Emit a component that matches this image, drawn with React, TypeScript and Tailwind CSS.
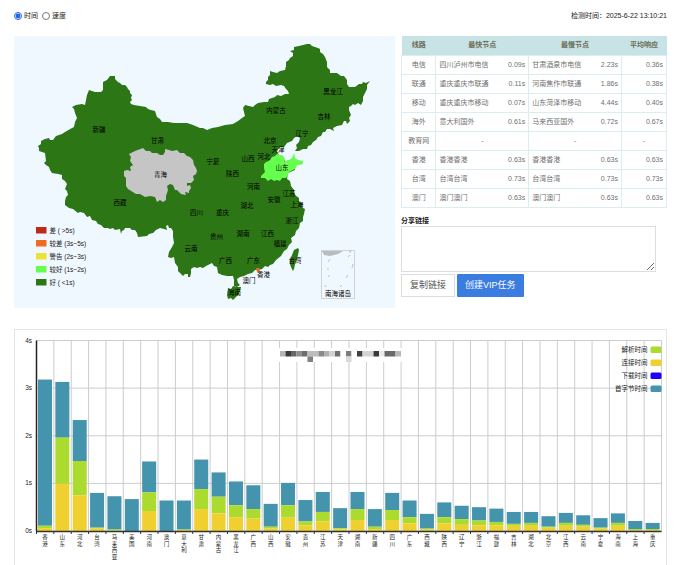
import * as React from 'react';

type RouteRow = {
  line: string;
  fastest: [string, string] | null;
  slowest: [string, string] | null;
  average: string;
};

const routes: RouteRow[] = [
  { line: '电信', fastest: ['四川泸州市电信', '0.09s'], slowest: ['甘肃酒泉市电信', '2.23s'], average: '0.36s' },
  { line: '联通', fastest: ['重庆重庆市联通', '0.11s'], slowest: ['河南焦作市联通', '1.86s'], average: '0.38s' },
  { line: '移动', fastest: ['重庆重庆市移动', '0.07s'], slowest: ['山东菏泽市移动', '4.44s'], average: '0.40s' },
  { line: '海外', fastest: ['意大利国外', '0.61s'], slowest: ['马来西亚国外', '0.72s'], average: '0.67s' },
  { line: '教育网', fastest: null, slowest: null, average: '-' },
  { line: '香港', fastest: ['香港香港', '0.63s'], slowest: ['香港香港', '0.63s'], average: '0.63s' },
  { line: '台湾', fastest: ['台湾台湾', '0.73s'], slowest: ['台湾台湾', '0.73s'], average: '0.73s' },
  { line: '澳门', fastest: ['澳门澳门', '0.63s'], slowest: ['澳门澳门', '0.63s'], average: '0.63s' },
];

// [name, x, y] of each label's centre
const mapLabels: [string, number, number][] = [
  ['新疆', 170, 186], ['甘肃', 287, 209], ['青海', 293, 277], ['西藏', 212, 332],
  ['四川', 365, 353], ['云南', 354, 425], ['黑龙江', 638, 110], ['内蒙古', 524, 149],
  ['吉林', 620, 160], ['辽宁', 576, 195], ['北京', 512, 208], ['天津', 528, 226],
  ['宁夏', 398, 250], ['山西', 468, 245], ['河北', 500, 241], ['陕西', 437, 274],
  ['山东', 536, 263], ['河南', 479, 300], ['江苏', 550, 314], ['安徽', 520, 326],
  ['上海', 566, 337], ['湖北', 466, 339], ['重庆', 417, 353], ['浙江', 556, 368],
  ['贵州', 405, 400], ['湖南', 458, 394], ['江西', 507, 394], ['福建', 532, 414],
  ['广西', 423, 448], ['广东', 479, 448], ['台湾', 562, 448], ['香港', 499, 477],
  ['澳门', 470, 488], ['海南', 441, 512], ['南海诸岛', 648, 514],
];

const mapLegend = [
  { label: '差 ( >5s)', color: '#bd2a17' },
  { label: '较差 (3s~5s)', color: '#ee6b24' },
  { label: '警告 (2s~3s)', color: '#e8e337' },
  { label: '较好 (1s~2s)', color: '#66ff4d' },
  { label: '好 ( <1s)', color: '#2d7616' },
];

const chartLegend = [
  { label: '解析时间', color: '#abdb2e' },
  { label: '连接时间', color: '#f0d02f' },
  { label: '下载时间', color: '#2200ff' },
  { label: '首字节时间', color: '#4494ae' },
];

// [region, total, connect + dns, connect] in seconds
const bars: [string, number, number, number][] = [
  ['香港', 3.18, 0.11, 0.06], ['山东', 3.13, 1.96, 0.99], ['河北', 2.33, 1.47, 0.75],
  ['台湾', 0.8, 0.07, 0.05], ['马来西亚', 0.73, 0.03, 0.01], ['美国', 0.67, 0, 0],
  ['河南', 1.46, 0.81, 0.42], ['澳门', 0.64, 0, 0], ['意大利', 0.64, 0.03, 0.02],
  ['甘肃', 1.5, 0.88, 0.46], ['内蒙古', 1.23, 0.72, 0.37], ['黑龙江', 1.04, 0.54, 0.29],
  ['广西', 0.96, 0.46, 0.26], ['山西', 0.57, 0.09, 0.05], ['安徽', 1.01, 0.54, 0.28],
  ['贵州', 0.65, 0.2, 0.12], ['江苏', 0.82, 0.4, 0.2], ['天津', 0.48, 0.06, 0.03],
  ['湖南', 0.82, 0.46, 0.23], ['新疆', 0.46, 0.09, 0.04], ['四川', 0.8, 0.44, 0.23],
  ['广东', 0.64, 0.29, 0.16], ['西藏', 0.36, 0.05, 0.03], ['陕西', 0.6, 0.29, 0.16],
  ['辽宁', 0.53, 0.25, 0.13], ['浙江', 0.5, 0.22, 0.12], ['福建', 0.47, 0.19, 0.12],
  ['吉林', 0.4, 0.15, 0.11], ['湖北', 0.4, 0.17, 0.11], ['北京', 0.31, 0.09, 0.07],
  ['江西', 0.38, 0.17, 0.11], ['云南', 0.33, 0.13, 0.1], ['宁夏', 0.27, 0.07, 0.05],
  ['海南', 0.37, 0.17, 0.11], ['上海', 0.21, 0.04, 0.02], ['重庆', 0.17, 0.04, 0.02],
];

// Pixelated strip over the chart that hides the tested address
const mosaic = [
  '#b5b5b5', '#3a3a3a', '#686868', '#909090', '#6d6d6d', '#bbbbbb', '#bdbdbd', '#8a8a8a',
  '#b0b0b0', '#d2d2d2', '#707070', '#ffffff', '#7d7d7d', '#ffffff', '#404040', '#d4d4d4',
  '#d4d4d4', '#3a3a3a', '#ececec', '#6a6a6a', '#6a6a6a', '#b8b8b8',
];

const MAINLAND =
  'M110 76L115 76L115 79L118 82L120 83L122 85L125 85L127 87L128 89L130 91L130 93L132 95L131 98L132 100L130 102L131 104L134 105L140 106L146 107L148 109L151 110L155 111L157 117L160 119L162 122L168 122L174 123L187 123L193 125L200 128L203 128L207 130L212 128L218 127L225 125L233 124L238 121L242 118L245 116L244 112L243 108L245 105L249 106L253 107L255 105L258 103L264 102L268 102L269 99L272 98L275 97L277 95L281 96L285 94L289 94L288 91L286 89L284 86L281 85L276 86L273 84L270 85L266 84L266 82L268 80L268 77L270 75L270 71L273 72L277 73L280 71L285 70L286 66L286 62L289 60L290 58L293 56L293 53L290 51L294 50L294 47L299 46L303 45L307 44L310 44L312 46L318 48L320 49L320 52L323 54L325 57L327 62L327 67L330 70L330 73L337 73L341 76L344 76L347 80L347 84L349 87L355 87L359 84L362 84L363 82L366 83L370 81L367 85L367 89L365 93L363 97L363 101L361 105L358 103L355 105L353 104L351 106L349 107L349 110L351 115L349 118L350 121L347 124L346 121L344 121L342 125L337 126L333 128L334 131L330 129L327 129L325 132L323 132L321 136L318 137L316 140L313 142L311 145L308 146L307 149L303 149L299 151L295 151L297 148L296 145L299 142L300 138L297 136L294 138L292 141L287 143L284 147L281 147L278 149L277 152L279 155L283 156L285 162L289 160L294 163L295 170L288 173L287 179L290 181L291 186L294 190L295 195L299 198L299 202L303 204L301 207L305 209L304 214L303 217L303 221L300 223L299 228L296 231L295 235L291 238L292 242L289 245L287 249L284 251L281 256L276 260L273 264L270 265L268 267L265 266L262 269L258 270L255 270L252 273L248 274L244 276L240 277L237 279L238 283L240 285L237 287L234 286L234 280L233 276L227 276L222 275L218 273L217 267L214 266L212 263L208 265L206 266L203 268L200 267L197 268L194 267L191 269L191 273L190 277L188 277L188 274L185 274L183 276L180 273L178 271L178 267L175 263L174 257L171 258L168 257L169 252L172 247L174 243L173 237L173 231L171 228L169 228L168 225L166 226L167 230L164 229L160 228L156 230L153 233L149 234L147 236L138 237L137 233L135 230L132 230L130 228L125 228L124 230L122 231L121 234L120 229L115 230L113 228L110 229L108 228L104 228L101 225L98 224L96 221L92 220L90 216L87 217L84 213L80 212L78 213L73 209L69 208L65 205L65 201L66 197L68 195L67 191L65 189L67 184L65 181L62 179L62 175L58 174L52 173L50 170L49 167L46 165L44 163L46 161L45 153L42 152L39 151L39 148L38 146L41 144L41 141L45 139L49 138L50 140L53 140L56 136L62 134L65 132L72 128L74 127L75 122L77 118L75 113L74 109L72 107L76 105L82 104L85 105L86 100L87 95L89 90L92 91L95 92L101 92L103 90L103 87L103 82L107 80Z';
const QINGHAI =
  'M129 154L135 151L143 148L146 151L150 151L152 153L157 153L160 155L163 155L165 152L165 149L169 150L172 151L177 150L180 153L184 153L187 156L190 157L193 160L194 165L196 168L197 171L196 174L193 176L194 180L191 183L187 183L187 186L190 185L191 188L189 191L189 193L185 192L186 195L181 194L177 190L175 190L173 185L170 184L167 186L168 190L166 196L166 200L163 202L160 200L157 202L155 197L150 196L145 197L140 194L136 194L128 189L126 186L126 182L126 178L124 176L124 171L127 170L131 171L130 167L133 165L130 161L131 157Z';
const SHANDONG =
  'M266 162L269 161L272 157L275 156L277 154L283 156L285 159L284 162L289 160L292 158L294 153L295 158L298 160L303 161L303 164L299 165L297 165L296 168L293 170L289 172L288 175L286 178L282 178L280 181L277 180L274 181L271 179L268 181L265 178L261 178L261 176L265 172L264 168L264 164Z';
const HAINAN = 'M228 288L231 289L233 286L237 287L241 287L240 291L238 295L236 297L233 300L231 298L228 299L227 295Z';
const TAIWAN = 'M298 248L299 250L298 255L297 260L295 264L294 269L293 271L291 267L290 264L290 260L292 255L294 250Z';

const ISLANDS = 'M322 251L343 251L338 254L330 256L324 255ZM349 251L352 250L350 253Z';
const ISLAND_DASHES =
  'M330 259L328 262M328 268L328 270M330 275L328 277M325 285L326 287M348 257L350 255M353 264L352 268M348 275L346 278M342 285L340 287';

function ChinaMap() {
  return (
    <svg
      viewBox="0 0 762 544"
      className="block w-full bg-[#f0f8ff] font-['Liberation_Sans','Noto_Sans_CJK_SC',sans-serif]"
      role="img"
      aria-label="全国响应时间地图"
    >
      <g transform="scale(2) translate(-14 -36)">
        <path d={MAINLAND} fill="#2d7616" />
        <path d={HAINAN} fill="#2d7616" />
        <path d={TAIWAN} fill="#2d7616" />
        <path d={QINGHAI} fill="#c5c5c5" />
        <path d={SHANDONG} fill="#66ff4d" />
        <path d="M256 268L259 268L260 271L257 272Z" fill="#ee6b24" />
        <path d={ISLANDS} fill="#b8bcc0" />
        <path d={ISLAND_DASHES} fill="none" stroke="#bcc2c8" strokeWidth="1" />
      </g>
      <rect x="615" y="429" width="66" height="96" fill="none" stroke="#d0d4d8" strokeWidth="2" />
      {mapLabels.map(([name, x, y]) => (
        <text key={name} x={x} y={y + 5} textAnchor="middle" fontSize="13" fill="#000">
          {name}
        </text>
      ))}
      {mapLegend.map((item, i) => (
        <g key={item.label}>
          <rect x="44" y={382 + i * 26} width="21" height="13" fill={item.color} />
          <text x="71" y={393 + i * 26} fontSize="13" fill="#222">
            {item.label}
          </text>
        </g>
      ))}
    </svg>
  );
}

const LEFT = 45;
const RIGHT = 1295;
const TOP = 23;
const BASE = 404;
const STEP = (RIGHT - LEFT) / bars.length;
const SECOND = (BASE - TOP) / 4;

function TimingChart() {
  return (
    <svg
      viewBox="2 2 1302 470"
      className="block w-full font-['Liberation_Sans','Noto_Sans_CJK_SC',sans-serif]"
      role="img"
      aria-label="各地区响应时间"
    >
      {[0, 1, 2, 3, 4].map((s) => (
        <g key={s}>
          <path d={`M${LEFT} ${BASE - s * SECOND}H${RIGHT}`} stroke="#ccc" strokeWidth="2" />
          <text x="36" y={BASE - s * SECOND + 4} textAnchor="end" fontSize="13" fill="#222">
            {s}s
          </text>
        </g>
      ))}
      {bars.map(([name], i) => (
        <path key={name} d={`M${LEFT + (i + 1) * STEP} ${TOP}V${BASE}`} stroke="#ccc" strokeWidth="2" />
      ))}
      {bars.map(([name, total, dns, connect], i) => {
        const x = LEFT + i * STEP + 3;
        return (
          <g key={name}>
            <rect x={x} y={BASE - total * SECOND} width="28" height={(total - dns) * SECOND} fill="#4494ae" />
            <rect x={x} y={BASE - dns * SECOND} width="28" height={(dns - connect) * SECOND} fill="#abdb2e" />
            <rect x={x} y={BASE - connect * SECOND} width="28" height={connect * SECOND} fill="#f0d02f" />
            <path d={`M${LEFT + i * STEP} ${BASE}v6`} stroke="#333" strokeWidth="2" />
            {name.split('').map((char, n) => (
              <text key={n} x={x + 14} y={420 + n * 13} textAnchor="middle" fontSize="11" fill="#222">
                {char}
              </text>
            ))}
          </g>
        );
      })}
      <path d={`M${LEFT} ${TOP}V${BASE}`} stroke="#222" strokeWidth="3" />
      <path d={`M${LEFT - 1} ${BASE + 1}H${RIGHT}`} stroke="#333" strokeWidth="3" />

      <rect x="528" y="38" width="250" height="28" fill="#fff" />
      {mosaic.map((color, i) => (
        <rect key={i} x={532 + i * 11} y="44" width="11" height="11" fill={color} />
      ))}
      <rect x="587" y="55" width="11" height="11" fill="#808080" />
      <rect x="664" y="55" width="11" height="11" fill="#dadada" />

      {chartLegend.map((item, i) => (
        <g key={item.label}>
          <rect x="1273" y={35 + i * 26} width="22" height="13" rx="3" fill={item.color} />
          <text x="1267" y={46 + i * 26} textAnchor="end" fontSize="13" fill="#222">
            {item.label}
          </text>
        </g>
      ))}
    </svg>
  );
}

function NodeCell({ node }: { node: [string, string] | null }) {
  return (
    <td className="border border-[#dbedee] px-[3px] text-center">
      {node ? (
        <div className="flex justify-between whitespace-nowrap">
          <span>{node[0]}</span>
          <span>{node[1]}</span>
        </div>
      ) : (
        '-'
      )}
    </td>
  );
}

function RouteTable() {
  return (
    <table className="w-full table-fixed border-collapse text-[7px] leading-[10px] text-[#707070]">
      <thead>
        <tr className="h-[19px] bg-[#c8e3e5] text-[#6b6b55]">
          <th className="w-[13%] font-bold">线路</th>
          <th className="w-[35%] font-bold">最快节点</th>
          <th className="w-[35%] font-bold">最慢节点</th>
          <th className="font-bold">平均响应</th>
        </tr>
      </thead>
      <tbody>
        {routes.map((row) => (
          <tr key={row.line} className="h-[19px]">
            <td className="border border-[#dbedee] text-center">{row.line}</td>
            <NodeCell node={row.fastest} />
            <NodeCell node={row.slowest} />
            <td className={`border border-[#dbedee] px-[3px] ${row.average === '-' ? 'text-center' : 'text-right'}`}>
              {row.average}
            </td>
          </tr>
        ))}
      </tbody>
    </table>
  );
}

const App: React.FC = () => {
  const [mode, setMode] = React.useState<'time' | 'speed'>('time');
  const [shareLink, setShareLink] = React.useState('');

  return (
    <div className="bg-white pl-[14px] pr-[13px] pt-[11px] font-['Liberation_Sans','Noto_Sans_CJK_SC',sans-serif] text-[7px] leading-[10px] text-[#222]">
      <header className="flex h-[25px] items-start justify-between">
        <div className="flex gap-1">
          <label className="flex items-center gap-[2px]">
            <input
              type="radio"
              name="mode"
              className="size-[8px] accent-[#2563eb]"
              checked={mode === 'time'}
              onChange={() => setMode('time')}
            />
            时间
          </label>
          <label className="flex items-center gap-[2px]">
            <input
              type="radio"
              name="mode"
              className="size-[8px] accent-[#2563eb]"
              checked={mode === 'speed'}
              onChange={() => setMode('speed')}
            />
            速度
          </label>
        </div>
        <p>检测时间：2025-6-22 13:10:21</p>
      </header>

      <main>
        <div className="grid grid-cols-[381fr_266fr] gap-[6px]">
          <ChinaMap />
          <section>
            <RouteTable />
            <label htmlFor="share" className="mt-2 block font-bold">
              分享链接
            </label>
            <textarea
              id="share"
              className="block h-[46px] w-[96%] resize border border-[#ddd] bg-white p-1"
              value={shareLink}
              onChange={(e) => setShareLink(e.target.value)}
            />
            <div className="mt-[2px] flex gap-[2px] text-[9px]">
              <button className="h-[23px] border border-[#ddd] bg-white px-2 text-[#555]">复制链接</button>
              <button className="h-[23px] rounded-[1px] bg-[#3b7ce0] px-2 text-white">创建VIP任务</button>
            </div>
          </section>
        </div>

        <section className="mt-[21px] border border-b-0 border-[#e4e4e4]">
          <TimingChart />
        </section>
      </main>
    </div>
  );
};

export default App;
